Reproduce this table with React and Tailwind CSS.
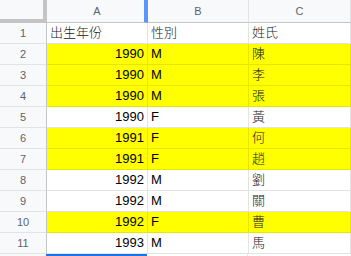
import React from "react";

const rows = [
  ["出生年份", "性別", "姓氏", false, true],
  ["1990", "M", "陳", true],
  ["1990", "M", "李", true],
  ["1990", "M", "張", true],
  ["1990", "F", "黃", false],
  ["1991", "F", "何", true],
  ["1991", "F", "趙", true],
  ["1992", "M", "劉", false],
  ["1992", "M", "關", false],
  ["1992", "F", "曹", true],
  ["1993", "M", "馬", false],
];

const font = { fontFamily: '"Liberation Sans", Arial, "Noto Sans CJK TC", sans-serif' };

const App = () => {
  return (
    <div className="w-[351px] h-[256px] overflow-hidden bg-white text-[13px] text-black" style={font}>
      {/* column headers */}
      <div className="flex h-[23px]">
        <div className="w-[47px] shrink-0 bg-[#f8f9fa] border-r-[4px] border-b-[4px] border-r-[#c4c4c4] border-b-[#c4c4c4]" />
        <div className="w-[101px] shrink-0 flex items-center justify-center bg-[#f8f9fa] border-r-[4px] border-r-[#5b95f9] border-b border-b-[#c4c4c4] text-[11px] text-[#5f6368] pl-[3px]">A</div>
        <div className="w-[101px] shrink-0 flex items-center justify-center bg-[#f8f9fa] border-r border-b border-[#e2e3e3] border-b-[#c4c4c4] text-[11px] text-[#5f6368]">B</div>
        <div className="w-[102px] shrink-0 flex items-center justify-center bg-[#f8f9fa] border-r border-b border-[#e2e3e3] border-b-[#c4c4c4] text-[11px] text-[#5f6368]">C</div>
      </div>

      {rows.map(([a, b, c, yellow, header], i) => {
        const cell = yellow
          ? "bg-[#ffff00] border-r border-b border-[#e6e600]"
          : "bg-white border-r border-b border-[#e2e3e3]";
        return (
          <div key={i} className="flex h-[21px]">
            <div className="w-[47px] shrink-0 flex items-center justify-center bg-[#f8f9fa] border-r border-r-[#c4c4c4] border-b border-b-[#e2e3e3] text-[11px] text-[#5f6368]">
              {i + 1}
            </div>
            <div className={`w-[101px] shrink-0 flex items-center px-[3px] ${header ? "justify-start font-light text-[#222]" : "justify-end"} ${cell}`}>
              {a}
            </div>
            <div className={`w-[101px] shrink-0 flex items-center px-[3px] ${header ? "font-light text-[#222]" : ""} ${cell}`}>{b}</div>
            <div className={`w-[102px] shrink-0 flex items-center px-[3px] font-light text-[#222] ${cell}`}>{c}</div>
          </div>
        );
      })}

      {/* row 12, selected cell edge */}
      <div className="flex h-[21px]">
        <div className="w-[47px] shrink-0 bg-[#f8f9fa] border-r border-r-[#c4c4c4]" />
        <div className="w-[101px] shrink-0 -ml-px border-t-2 border-[#1a73e8]" />
        <div className="w-[101px] shrink-0 border-r border-[#e2e3e3]" />
      </div>
    </div>
  );
};

export default App;
